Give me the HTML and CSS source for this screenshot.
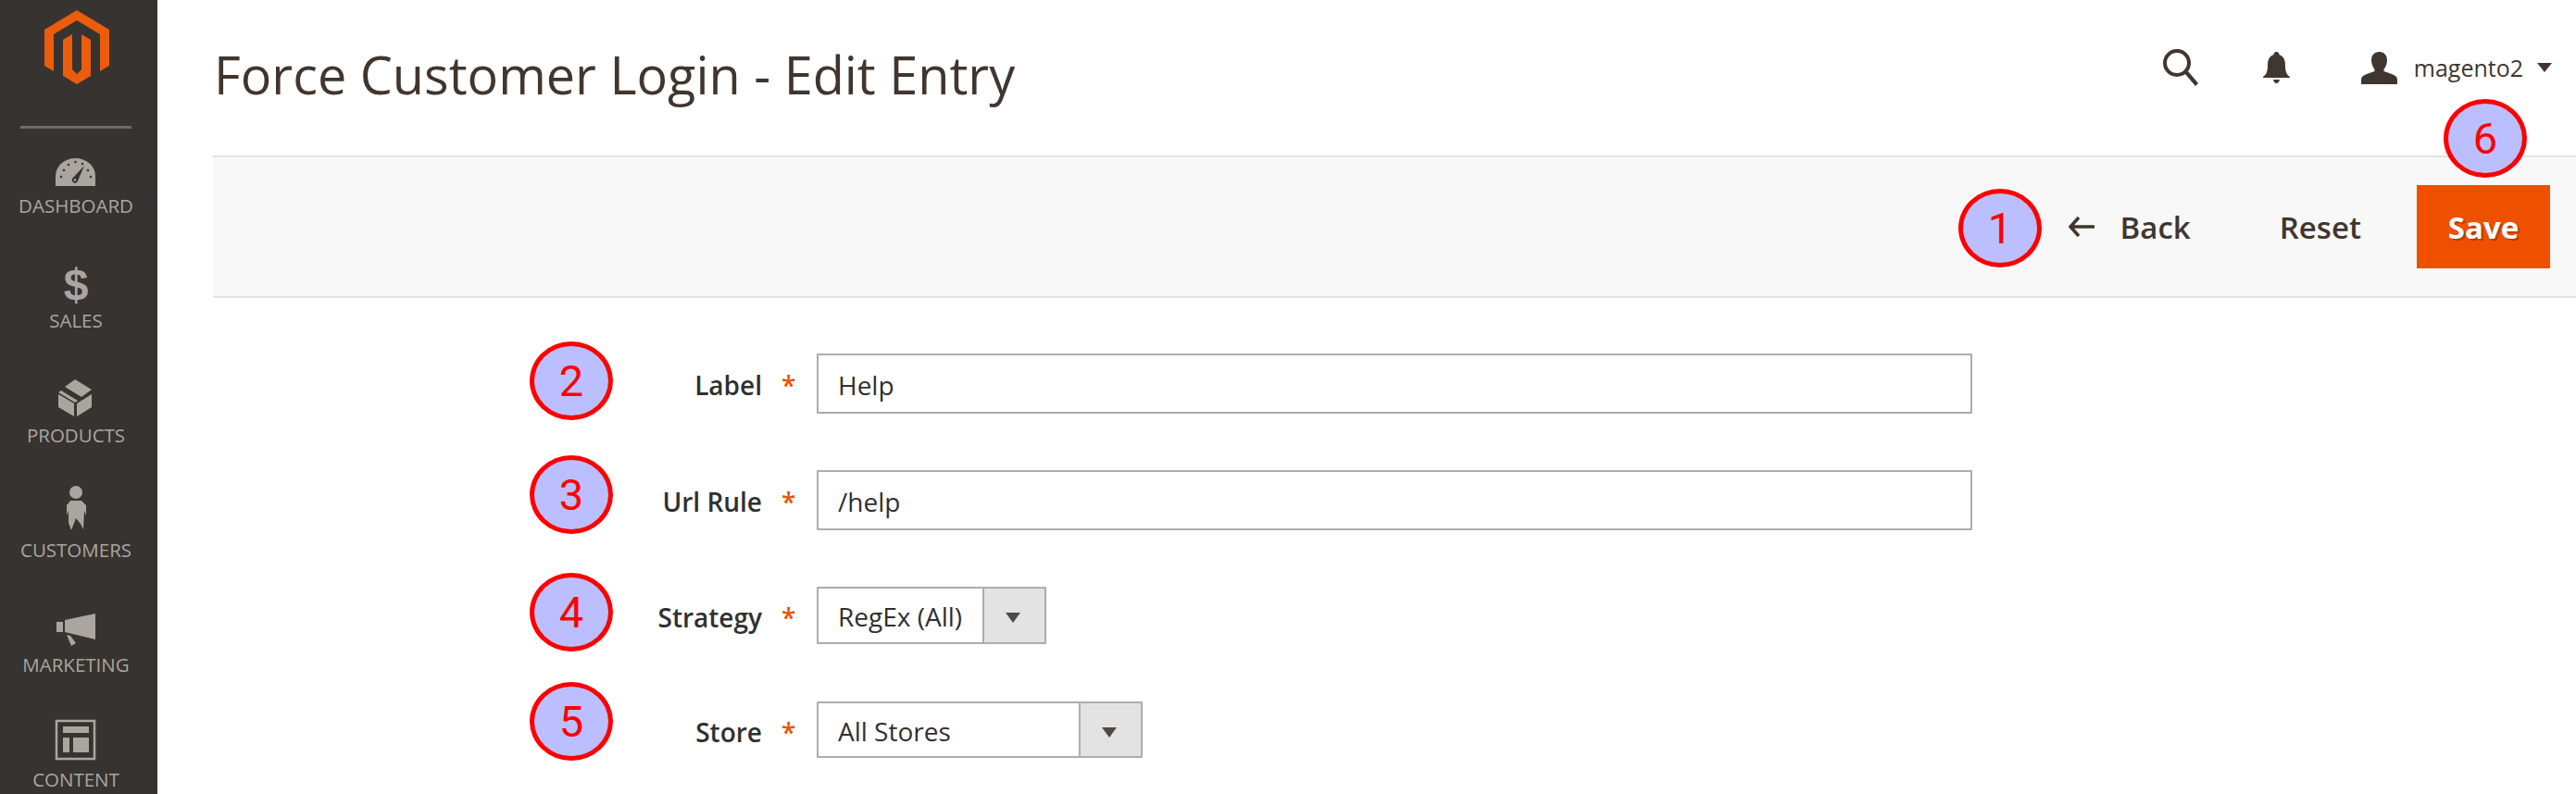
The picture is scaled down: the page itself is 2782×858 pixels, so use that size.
FILE: index.html
```html
<!DOCTYPE html>
<html>
<head>
  <meta charset="utf-8">
  <title>Force Customer Login - Edit Entry</title>
  <link rel="stylesheet" href="styles.css">
</head>
<body>

<div class="page">

  <!-- left menu -->
  <nav class="menu">
    <div class="logo">
      <svg width="70" height="80" viewBox="48 11 70 80">
        <path class="logo-mark" d="M83 11L118 32V71L108 77V37L83 22L58 37V77L48 71V32Z"/>
        <path class="logo-mark" d="M68 43L78 37V75L83 80L88 75V37L98 43V82L83 91L68 82Z"/>
      </svg>
    </div>
    <div class="menu-line"></div>

    <a class="menu-item">
      <svg class="menu-icon" viewBox="0 0 60 46">
        <path class="icon-fill" d="M8 40V29A21.5 19 0 0 1 51 29V40Z"/>
        <g class="icon-dark">
          <circle cx="14" cy="30" r="1.3"/><circle cx="17" cy="23" r="1.3"/><circle cx="22" cy="17" r="1.3"/>
          <circle cx="29.500" cy="14" r="1.3"/><circle cx="37" cy="16" r="1.300"/><circle cx="43" cy="23" r="1.3"/><circle cx="46" cy="30" r="1.3"/>
          <path d="M39 18L31.500 35.500A3.200 3.200 0 1 1 26.500 31.500Z"/>
        </g>
        <circle class="icon-fill" cx="29" cy="33.500" r="1.300"/>
      </svg>
      <span>DASHBOARD</span>
    </a>

    <a class="menu-item">
      <span class="menu-icon dollar">$</span>
      <span>SALES</span>
    </a>

    <a class="menu-item">
      <svg class="menu-icon" viewBox="0 0 60 46">
        <path class="icon-fill" d="M11 15L29 26L32 24L14 13Z"/>
        <path class="icon-fill" d="M18 9L29 1L47 12L36 20Z"/>
        <path class="icon-fill" d="M11 17L28 27V41L11 31Z"/>
        <path class="icon-fill" d="M31 27L47 17V31L31 41Z"/>
      </svg>
      <span>PRODUCTS</span>
    </a>

    <a class="menu-item">
      <svg class="menu-icon" viewBox="0 0 60 46">
        <circle class="icon-fill" cx="30" cy="-1" r="7"/>
        <path class="icon-fill" d="M24 8H36L41 13V24L39 19L38 39L35 33L30 27L25 40L22 32V19L20 24V13Z"/>
      </svg>
      <span>CUSTOMERS</span>
    </a>

    <a class="menu-item">
      <svg class="menu-icon" viewBox="0 0 60 46">
        <path class="icon-fill" d="M18 13L51 6V34L18 26Z"/>
        <path class="icon-fill" d="M9 15H16V26H9Z"/>
        <path class="icon-fill" d="M20 29L24 30L30 38L25 41Z"/>
      </svg>
      <span>MARKETING</span>
    </a>

    <a class="menu-item">
      <svg class="menu-icon" viewBox="0 0 60 46">
        <rect class="icon-line" x="9" y="-2" width="41" height="41"/>
        <path class="icon-fill" d="M16 4H44V11H16ZM16 16H23V32H16ZM27 16H44V32H27Z"/>
      </svg>
      <span>CONTENT</span>
    </a>
  </nav>

  <main class="content">

    <header class="top">
      <h1 class="title">Force Customer Login - Edit Entry</h1>
      <div class="tools">
        <svg class="search" width="40" height="40" viewBox="0 0 40 40">
          <circle cx="17" cy="15" r="13" fill="none" stroke="#41362f" stroke-width="4"/>
          <path d="M25 26L29 24L40 37L37 40Z" fill="#41362f"/>
        </svg>
        <svg class="bell" width="29" height="34" viewBox="0 0 29 34">
          <path fill="#41362f" d="M14.500 0C12.500 0 11.500 1.500 11.500 3C6 5 5 10 5 15C5 22 3 25 0 27V28H29V27C26 25 24 22 24 15C24 10 23 5 17.500 3C17.500 1.500 16.500 0 14.500 0Z"/>
          <path fill="#41362f" d="M11 30H18Q17 34 14.500 34Q12 34 11 30Z"/>
        </svg>
        <svg class="user" width="39" height="35" viewBox="0 0 39 35">
          <path fill="#41362f" d="M19.500 0C25 0 28 4 28 9C28 13 26 17 24.500 19V21L33 24C37 25.500 39 27 39 30V35H0V30C0 27 2 25.500 6 24L14.500 21V19C13 17 11 13 11 9C11 4 14 0 19.500 0Z"/>
        </svg>
        <span class="user-name">magento2</span>
        <span class="caret"></span>
      </div>
    </header>

    <div class="actions">
      <svg class="back-arrow" width="29" height="24" viewBox="0 0 29 24">
        <path d="M12 2L3 12L12 22M3 12H29" fill="none" stroke="#41362f" stroke-width="3.500"/>
      </svg>
      <a class="back">Back</a>
      <a class="reset">Reset</a>
      <button class="save">Save</button>
    </div>

    <form class="form">
      <div class="row">
        <label class="row-label">Label</label>
        <span class="star">*</span>
        <input class="text-input" type="text" value="Help">
      </div>
      <div class="row">
        <label class="row-label">Url Rule</label>
        <span class="star">*</span>
        <input class="text-input" type="text" value="/help">
      </div>
      <div class="row row-pick">
        <label class="row-label">Strategy</label>
        <span class="star">*</span>
        <div class="pick pick-strategy">
          <span class="pick-value">RegEx (All)</span>
          <span class="pick-arrow"></span>
        </div>
      </div>
      <div class="row row-pick row-store">
        <label class="row-label">Store</label>
        <span class="star">*</span>
        <div class="pick pick-store">
          <span class="pick-value">All Stores</span>
          <span class="pick-arrow"></span>
        </div>
      </div>
    </form>
  </main>

  <!-- numbered callouts over the page -->
  <div class="mark mark-1">1</div>
  <div class="mark mark-2">2</div>
  <div class="mark mark-3">3</div>
  <div class="mark mark-4">4</div>
  <div class="mark mark-5">5</div>
  <div class="mark mark-6">6</div>
</div>

</body>
</html>
```

FILE: styles.css
```css
/* page */
* {
  box-sizing: border-box;
}

body {
  margin: 0;
  font-family: "Open Sans", "Liberation Sans", sans-serif;
  color: #303030;
  background: #fff;
}

.page {
  position: relative;
  display: flex;
  height: 858px;
  overflow: hidden;
}

/* left menu */
.menu {
  flex: 0 0 170px;
  background: #373330;
  padding-right: 6px;
}

.logo {
  height: 136px;
  padding: 11px 0 0 48px;
}

.logo svg {
  display: block;
}

.logo-mark {
  fill: #eb5c0c;
}

.menu-line {
  width: 120px;
  height: 3px;
  margin-left: 22px;
  background: #736a64;
}

.menu-item {
  display: flex;
  flex-direction: column;
  align-items: center;
  height: 124px;
  padding-top: 22px;
  font-size: 20.500px;
  line-height: 30px;
  color: #aaa69f;
}

.menu-icon {
  display: block;
  width: 60px;
  height: 46px;
  overflow: visible;
}

.icon-fill {
  fill: #aaa69f;
}

.icon-dark {
  fill: #373330;
}

.icon-line {
  fill: none;
  stroke: #aaa69f;
  stroke-width: 2.500;
}

.dollar {
  font-family: "Liberation Sans", sans-serif;
  font-size: 48px;
  font-weight: 700;
  line-height: 46px;
  text-align: center;
}

/* header */
.content {
  flex: 1;
  min-width: 0;
  margin-left: 60px;
}

.top {
  display: flex;
  justify-content: space-between;
  height: 168px;
  padding: 42px 26px 0 1px;
}

.title {
  margin: 0;
  font-size: 55.800px;
  font-weight: 400;
  line-height: 76px;
  color: #41362f;
}

.tools {
  display: flex;
  align-items: center;
  height: 40px;
  margin-top: 11px;
}

.bell {
  margin-left: 70px;
}

.user {
  margin-left: 77px;
  margin-right: 18px;
}

.user-name {
  font-size: 25px;
  color: #41362f;
}

.caret {
  width: 0;
  height: 0;
  margin-left: 15px;
  border-style: solid;
  border-width: 10px 8px 0;
  border-color: #41362f transparent transparent;
}

/* action bar */
.actions {
  display: flex;
  align-items: center;
  justify-content: flex-end;
  height: 154px;
  padding-right: 28px;
  background: #f8f8f8;
  border-top: 2px solid #e3e3e3;
  border-bottom: 2px solid #e3e3e3;
  font-size: 33px;
  font-weight: 600;
  color: #41362f;
}

.back {
  margin-left: 28px;
  margin-right: 96px;
}

.reset {
  margin-right: 60px;
}

.save {
  width: 144px;
  height: 90px;
  padding: 0;
  border: 0;
  background: #ef5000;
  color: #fff;
  font-family: inherit;
  font-size: 33px;
  font-weight: 700;
  text-shadow: 2px 2px 0 #b93d00;
}

/* form */
.form {
  display: flex;
  flex-direction: column;
  gap: 61px;
  padding-top: 60px;
}

.row {
  display: flex;
  align-items: center;
}

.row-store {
  margin-top: 1px;
}

.row-label {
  width: 593px;
  padding-top: 2px;
  font-size: 28px;
  font-weight: 600;
  text-align: right;
}

.star {
  width: 59px;
  padding-top: 2px;
  padding-left: 21px;
  font-size: 28px;
  font-weight: 600;
  color: #eb5202;
}

.row-pick .row-label,
.row-pick .star {
  padding-top: 4px;
}

.text-input {
  width: 1248px;
  height: 65px;
  padding: 2px 21px 0;
  border: 2px solid #adadad;
  border-radius: 1px;
  font-family: inherit;
  font-size: 28px;
  color: #303030;
}

.pick {
  display: flex;
  height: 62px;
  border: 2px solid #adadad;
  border-radius: 1px;
  font-size: 28px;
}

.row-store .pick {
  height: 61px;
}

.pick-strategy {
  width: 248px;
}

.pick-store {
  width: 352px;
}

.pick-value {
  flex: 1;
  padding-left: 21px;
  line-height: 60px;
  white-space: nowrap;
}

.pick-arrow {
  position: relative;
  flex: 0 0 67px;
  background: #e3e3e3;
  border-left: 2px solid #adadad;
}

.pick-arrow::after {
  content: "";
  position: absolute;
  top: 26px;
  left: 23px;
  border-style: solid;
  border-width: 11px 8px 0;
  border-color: #514943 transparent transparent;
}

/* callouts */
.mark {
  position: absolute;
  width: 90px;
  height: 85px;
  border: 5px solid #fe0000;
  border-radius: 50%;
  background: #bbbfff;
  font-family: Roboto, "Liberation Sans", sans-serif;
  font-size: 47px;
  line-height: 75px;
  text-align: center;
  color: #fe0000;
}

.mark-1 { left: 2115px; top: 204px; }
.mark-2 { left: 572px; top: 369px; }
.mark-3 { left: 572px; top: 492px; }
.mark-4 { left: 572px; top: 619px; }
.mark-5 { left: 572px; top: 737px; }
.mark-6 { left: 2639px; top: 107px; }
```
